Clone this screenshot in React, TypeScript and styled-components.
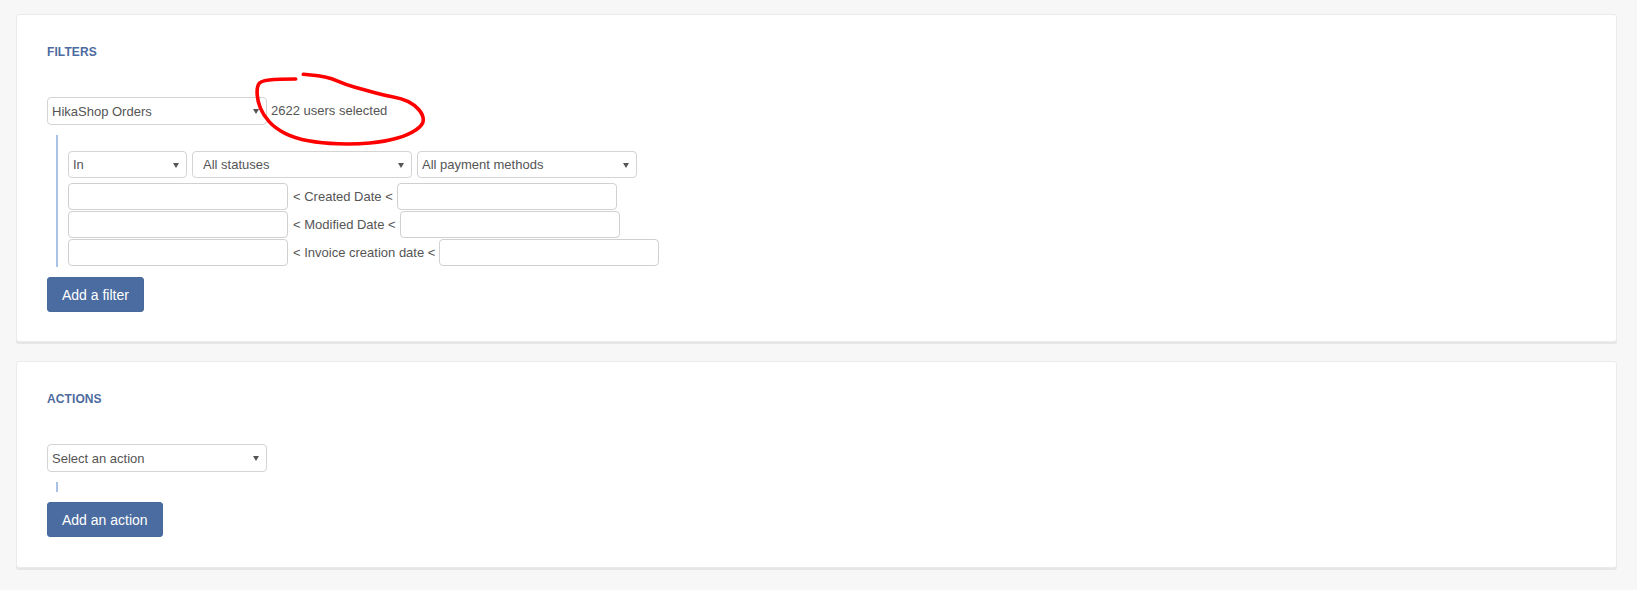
import React from "react";
import styled, { createGlobalStyle } from "styled-components";

const GlobalStyle = createGlobalStyle`
  html, body {
    margin: 0;
    padding: 0;
    background: #f7f7f7;
  }
  body {
    font-family: "Liberation Sans", Arial, sans-serif;
    font-size: 13px;
    color: #555;
  }
  * { box-sizing: border-box; }
`;

const Page = styled.div`
  position: relative;
  padding: 14px 20px 20px 16px;
  display: flex;
  flex-direction: column;
  gap: 19px;
`;

const Card = styled.section<{ $bottom?: number }>`
  background: #fff;
  border: 1px solid #ebebeb;
  border-radius: 3px;
  box-shadow: 0 2px 0 #e6e6e6;
  padding: 29px 30px ${(p) => p.$bottom ?? 30}px 30px;
  display: flex;
  flex-direction: column;
  align-items: flex-start;
`;

const Heading = styled.h3`
  margin: 0 0 37px 0;
  font-family: "Liberation Sans", Arial, sans-serif;
  font-size: 12px;
  line-height: 16px;
  font-weight: bold;
  color: #4d6b9e;
  letter-spacing: 0.1px;
`;

const TopRow = styled.div`
  display: flex;
  align-items: center;
  gap: 4px;
`;

const SelectWrap = styled.div<{ $w?: number; $h?: number }>`
  position: relative;
  width: ${(p) => p.$w ?? 220}px;
  height: ${(p) => p.$h ?? 27}px;
  flex: none;
`;

const NativeSelect = styled.select<{ $pad?: number }>`
  appearance: none;
  -webkit-appearance: none;
  width: 100%;
  height: 100%;
  margin: 0;
  border: 1px solid #d4d4d4;
  border-radius: 4px;
  background: #fff;
  padding: 0 16px 0 ${(p) => p.$pad ?? 4}px;
  font-family: "Liberation Sans", Arial, sans-serif;
  font-size: 13px;
  color: #555;
  outline: none;
`;

const Arrow = styled.span`
  position: absolute;
  right: 8px;
  top: 50%;
  margin-top: -2px;
  width: 0;
  height: 0;
  border-left: 3px solid transparent;
  border-right: 3px solid transparent;
  border-top: 5px solid #555;
  pointer-events: none;
`;

const Count = styled.span`
  font-size: 13px;
  color: #555;
  line-height: 16px;
`;

const Block = styled.div`
  margin: 10px 0 0 9px;
  border-left: 2px solid #a9c1e4;
  padding: 10px 0 0 10px;
  display: flex;
  flex-direction: column;
  align-items: flex-start;
`;

const SelectRow = styled.div`
  margin-top: 6px;
  margin-bottom: 5px;
  display: flex;
  gap: 5px;
`;

const DateRow = styled.div`
  display: flex;
  align-items: center;
  height: 28px;
  padding-bottom: 1px;
`;

const TextInput = styled.input`
  width: 220px;
  height: 27px;
  margin: 0;
  border: 1px solid #d0d0d0;
  border-radius: 4px;
  background: #fff;
  padding: 0 6px;
  font-family: "Liberation Sans", Arial, sans-serif;
  font-size: 13px;
  color: #555;
  outline: none;
`;

const DateLabel = styled.span`
  margin: 0 4px 0 5px;
  font-size: 13px;
  color: #555;
  white-space: nowrap;
`;

const Button = styled.button`
  margin-top: 10px;
  height: 35px;
  padding: 0 14px;
  border: 1px solid #476a9c;
  border-radius: 3px;
  background: #4b6ca0;
  color: #fff;
  font-family: "Liberation Sans", Arial, sans-serif;
  font-size: 14px;
  cursor: pointer;
`;

const Annotation = styled.svg`
  position: absolute;
  left: 250px;
  top: 68px;
  width: 180px;
  height: 82px;
  overflow: visible;
  pointer-events: none;
`;

const pts: [number, number][] = [
  [45.7, 11], [28.3, 11], [10, 13], [6.7, 20.3], [7.7, 33.7], [13.3, 47],
  [25, 60.3], [45, 70.3], [71.7, 75.3], [105, 76.3], [135, 73.7], [158.3, 67],
  [173.3, 57], [173.3, 47], [165, 37], [151.7, 30.3], [135, 27.7], [115, 22],
  [95, 16.3], [81.7, 10.3], [68.3, 7.7], [53.3, 6.3],
];

function smoothPath(p: [number, number][]) {
  let d = `M${p[0][0]} ${p[0][1]}`;
  for (let i = 1; i < p.length - 1; i++) {
    const mx = (p[i][0] + p[i + 1][0]) / 2;
    const my = (p[i][1] + p[i + 1][1]) / 2;
    d += ` Q${p[i][0]} ${p[i][1]} ${mx} ${my}`;
  }
  const last = p[p.length - 1];
  d += ` L${last[0]} ${last[1]}`;
  return d;
}

const Select = ({ value, w, h, pad }: { value: string; w?: number; h?: number; pad?: number }) => (
  <SelectWrap $w={w} $h={h}>
    <NativeSelect $pad={pad} defaultValue={value}>
      <option>{value}</option>
    </NativeSelect>
    <Arrow />
  </SelectWrap>
);

const dateFilters = ["Created Date", "Modified Date", "Invoice creation date"];

export default function App() {
  return (
    <>
      <GlobalStyle />
      <Page>
        <Card $bottom={29}>
          <Heading>FILTERS</Heading>
          <TopRow>
            <Select value="HikaShop Orders" h={28} />
            <Count>2622 users selected</Count>
          </TopRow>
          <Block>
            <SelectRow>
              <Select value="In" w={119} />
              <Select value="All statuses" pad={10} />
              <Select value="All payment methods" />
            </SelectRow>
            {dateFilters.map((f) => (
              <DateRow key={f}>
                <TextInput />
                <DateLabel>&lt; {f} &lt;</DateLabel>
                <TextInput />
              </DateRow>
            ))}
          </Block>
          <Button>Add a filter</Button>
        </Card>
        <Card>
          <Heading>ACTIONS</Heading>
          <Select value="Select an action" h={28} />
          <Block />
          <Button>Add an action</Button>
        </Card>
        <Annotation viewBox="0 0 180 82">
          <path
            d={smoothPath(pts)}
            fill="none"
            stroke="#ff0000"
            strokeWidth={3.6}
            strokeLinecap="round"
            strokeLinejoin="round"
          />
        </Annotation>
      </Page>
    </>
  );
}
